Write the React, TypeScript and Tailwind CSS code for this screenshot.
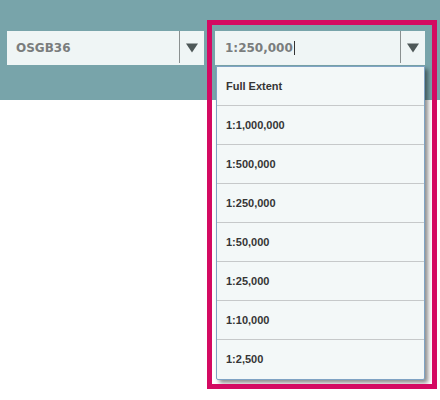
import React from 'react';

const scales = ['Full Extent', '1:1,000,000', '1:500,000', '1:250,000', '1:50,000', '1:25,000', '1:10,000', '1:2,500'];

function Arrow() {
  return (
    <svg width="12" height="10" viewBox="0 0 12 10">
      <path d="M0 0.5 L12 0.5 L6 9.5 Z" fill="#4e5858" />
    </svg>
  );
}

export default function App() {
  return (
    <div className="w-[440px] h-[400px] bg-white relative overflow-hidden" style={{ fontFamily: '"DejaVu Sans", sans-serif' }}>
      <div className="h-[100px] bg-[#78a4aa] flex items-start pt-[31px] pl-[7px] gap-[11px]">
        {/* Projection select */}
        <div className="w-[197px] h-[34px] bg-[#eff5f5] flex items-center">
          <div className="flex-1 pl-[9px] text-[12px] font-bold text-[#7a7d7d]">OSGB36</div>
          <div className="w-px h-[32px] self-start bg-[#8a9090]" />
          <div className="w-[24px] flex justify-center">
            <Arrow />
          </div>
        </div>

        {/* Scale select */}
        <div className="relative w-[210px] h-[34px]">
          <div className="w-full h-full bg-[#eff5f5] flex items-center">
            <div className="flex-1 pl-[10px] flex items-center text-[12px] font-bold text-[#7a7d7d]">
              1:250,000
              <span className="w-px h-[14px] bg-[#333] ml-px" />
            </div>
            <div className="w-px h-[32px] self-start bg-[#8a9090]" />
            <div className="w-[24px] flex justify-center">
              <Arrow />
            </div>
          </div>

          {/* dropdown menu */}
          <div className="absolute left-px top-[35px] w-[209px] bg-[#f3f8f8] border border-[#7fa3c4] rounded-b-[2px] shadow-[3px_3px_4px_rgba(0,0,0,0.45)] z-10">
            {scales.map((s, i) => (
              <div
                key={s}
                className={`h-[39px] flex items-center pl-[9px] text-[11px] font-bold text-[#353535] ${i < scales.length - 1 ? 'border-b border-[#c6c9ca]' : ''}`}
                style={{ fontFamily: '"Liberation Sans", Arial, sans-serif' }}
              >
                {s}
              </div>
            ))}
          </div>
        </div>
      </div>

      {/* highlight annotation */}
      <div className="absolute left-[207px] top-[20px] w-[230px] h-[369px] border-[5px] border-[#d40a62] pointer-events-none z-20" />
    </div>
  );
}
